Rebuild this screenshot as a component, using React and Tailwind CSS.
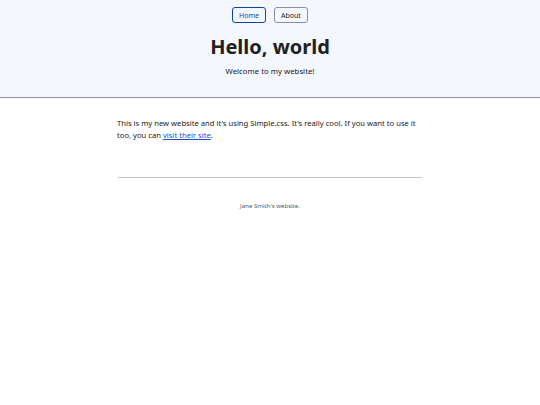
export default function App() {
  return (
    <div className="min-h-[405px] bg-white text-[#212121]" style={{ fontFamily: '"Noto Sans", sans-serif' }}>
      <header className="bg-[#f5f7ff] border-b border-[#898ea4] pt-[7px] pb-[20px] text-center">
        <nav className="flex justify-center gap-[8px]">
          <a className="h-[16px] px-[6px] flex items-center rounded-[3px] border border-[#0d47a1] text-[#0d47a1] text-[7px] leading-none">Home</a>
          <a className="h-[16px] px-[6px] flex items-center rounded-[3px] border border-[#898ea4] text-[#212121] text-[7px] leading-none">About</a>
        </nav>
        <h1 className="mt-[10px] text-[20px] leading-[28px] font-bold">Hello, world</h1>
        <p className="mt-[4px] text-[7.8px] leading-[12px]">Welcome to my website!</p>
      </header>
      <main className="w-[306px] mx-auto pt-[19px]">
        <p className="text-[7.65px] leading-[12px]">
          This is my new website and it's using Simple.css. It's really cool. If you want to use it too, you can{' '}
          <a className="text-[#1d4ed8] underline">visit their site</a>.
        </p>
      </main>
      <footer className="w-[304px] mx-auto mt-[36px] border-t border-[#c7c7c7] pt-[23px] text-center text-[6.1px] leading-[10px] text-[#585858]">
        Jane Smith's website.
      </footer>
    </div>
  );
}
